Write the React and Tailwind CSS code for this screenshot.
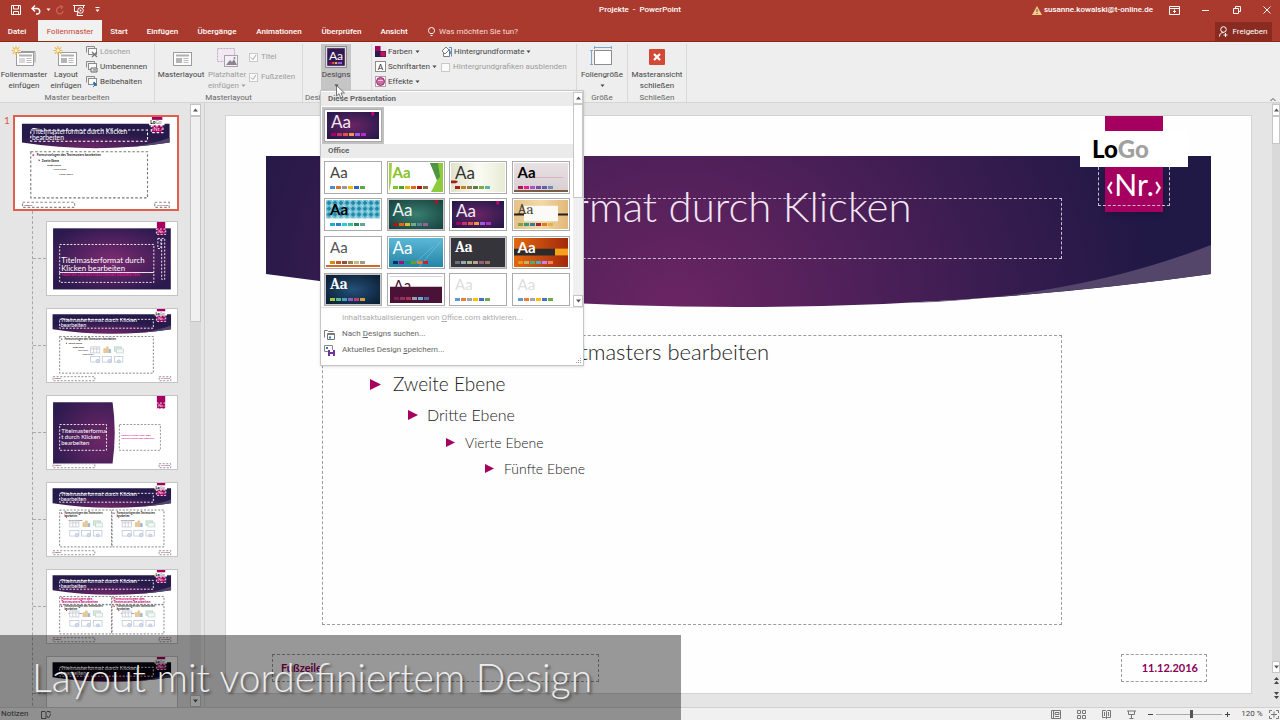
import React, { useState } from 'react';

const tabs = [
  { name: 'Datei', width: 'w-[34px]' },
  { name: 'Folienmaster', width: 'w-16' },
  { name: 'Start', width: 'w-[34px]' },
  { name: 'Einfügen', width: 'w-[53px]' },
  { name: 'Übergänge', width: 'w-14' },
  { name: 'Animationen', width: 'w-[68px]' },
  { name: 'Überprüfen', width: 'w-[57px]' },
  { name: 'Ansicht', width: 'w-12' },
];

const officeThemes = [
  { id: 'office', bg: 'bg-white', text: 'text-[#444]', colors: ['#4a90d0', '#e07030', '#999', '#f0b800', '#2f66b8', '#62a83c'] },
  { id: 'facette', bg: 'bg-white', text: 'text-[#85c226] font-bold', art: 'facet', colors: ['#85c226', '#4aa32e', '#e0b400', '#e06a1c', '#b01515', '#8a7040'] },
  { id: 'fetzen', bg: 'bg-linear-to-r from-[#e0e3cc] via-[#fbfbf4] to-[#e8ecd6]', text: 'text-[#333] text-[17px]', art: 'wisp', colors: ['#a32017', '#cf7a1c', '#8b7d57', '#5d7d4c', '#80aa50', '#62b39d'] },
  { id: 'galerie', bg: 'bg-linear-to-b from-[#e9e2e4] to-[#d6ced2]', text: 'text-black font-bold', art: 'gallery', colors: ['#b5125a', '#e0228a', '#a953cf', '#7550a5', '#5f5fae', '#6b90ad'] },
  { id: 'integral', bg: 'bg-white', text: 'text-black font-bold', art: 'integral', colors: ['#1badd8', '#2683c6', '#27ced7', '#42ba97', '#2c8853', '#62a39f'] },
  { id: 'ion', bg: 'bg-radial from-[#3a8070] to-[#16413f]', text: 'text-[#ebf5f0] text-[17px]', art: 'ion', frame: true, colors: ['#b01513', '#ea6312', '#e6b729', '#6bad8c', '#55839a', '#9e5e9b'] },
  { id: 'ion-raum', bg: 'bg-radial from-[#6a2366] to-[#211747]', text: 'text-[#f4e9f6] text-[17px]', art: 'ionraum', thick: true, colors: ['#a5005f', '#c9336a', '#e2554b', '#e99a4b', '#9d5ae0', '#b42bc9'] },
  { id: 'organisch', bg: 'bg-linear-to-r from-[#e6c288] via-[#f2d9a8] to-[#e2b878]', text: 'text-[#4a4034] font-serif', art: 'organic', colors: ['#7fa344', '#38987a', '#3479a8', '#a8242c', '#e0792c', '#e2b339'] },
  { id: 'rueckblick', bg: 'bg-white', text: 'text-[#555]', art: 'retro', colors: ['#e48312', '#bd582c', '#865640', '#9b8357', '#c2bc80', '#94a088'] },
  { id: 'segment', bg: 'bg-linear-to-b from-[#5bb8d6] to-[#2385a8]', text: 'text-white text-[17px]', art: 'slice', colors: ['#052f61', '#a50e82', '#14967c', '#6a9e1f', '#e87d37', '#c62324'] },
  { id: 'schiefer', bg: 'bg-[#36343b]', text: 'text-white font-bold font-serif', frame: true, colors: ['#6f6f74', '#92a9b9', '#a7b789', '#b9a489', '#8d6374', '#9b7362'] },
  { id: 'berlin', bg: 'bg-linear-to-r from-[#e3680e] to-[#a3280c]', text: 'text-white font-bold', art: 'berlin', colors: ['#f09415', '#c1b56b', '#4baf73', '#5aa6c0', '#d17df9', '#fa7e5c'] },
  { id: 'tiefe', bg: 'bg-radial from-[#24517a] to-[#0a1c30]', text: 'text-white font-bold font-serif', frame: true, colors: ['#a3c644', '#5ab88f', '#4a9fc0', '#8a60b8', '#c03f6c', '#d59e4a'] },
  { id: 'dividende', bg: 'bg-white', text: 'text-[#4d1434]', art: 'dividend', thick: true, colors: ['#7c1f56', '#903163', '#b2324b', '#969fa7', '#66b1ce', '#5563a8'] },
  { id: 'leer-1', bg: 'bg-white', text: 'text-[#ddd]', colors: ['#5b9bd5', '#ed7d31', '#a5a5a5', '#ffc000', '#4472c4', '#70ad47'] },
  { id: 'leer-2', bg: 'bg-white', text: 'text-[#ddd]', colors: ['#5b9bd5', '#ed7d31', '#a5a5a5', '#ffc000', '#4472c4', '#70ad47'] },
];

/* ---------- icons ---------- */

const SlideIcon = ({ star, wide }) => (
  <svg width="26" height="22" viewBox="0 0 26 22" fill="none">
    {wide && <path d="M10 5.500h14v11" stroke="#9c9c9c" />}
    <rect x="5.500" y="6.500" width={wide ? 17 : 18} height="13" fill="#fdfdfd" stroke="#9c9c9c" />
    <path d="M8 9.500h13" stroke="#b0b0b0" strokeWidth="2" />
    <rect x="8" y="12" width="6" height="5" fill={wide ? '#d8d8d8' : '#b5b5b5'} />
    <path d="M15.500 12.500h5M15.500 14.500h5M15.500 16.500h5" stroke="#aaa" strokeWidth=".8" />
    {star && <path d="M5 0v9M.5 4.500h9M1.800 1.300l6.400 6.400M8.200 1.300l-6.400 6.400" stroke="#efb545" strokeWidth="1.200" />}
    {star && <circle cx="5" cy="4.500" r="1.600" fill="#fff3cf" />}
  </svg>
);

const PlaceholderIcon = () => (
  <svg width="24" height="22" viewBox="0 0 24 22" fill="none">
    <rect x="2.500" y="2.500" width="17" height="13" fill="#f1e9f2" stroke="#c3a9c6" strokeDasharray="2 1" />
    <rect x="9.500" y="9.500" width="13" height="11" fill="#f5f0f6" stroke="#ab9fb0" />
    <path d="M11 19l4-5 2 2 2-3 3 6z" fill="#8d8493" />
    <circle cx="19.500" cy="12" r="1" fill="#8d8493" />
  </svg>
);

const SmallSlidesIcon = ({ kind }) => (
  <svg width="12" height="12" viewBox="0 0 12 12" fill="none" stroke="#8b8b8b">
    <path d="M.5 6.500v-6h8v2" />
    <rect x="2.500" y="2.500" width="8" height="6" fill="#fafafa" />
    {kind === 'delete' && <path d="M6 6l5 5M11 6l-5 5" stroke="#777" strokeWidth="1.200" />}
    {kind === 'rename' && <path d="M5 7h6v4H5zM7 9h3" fill="#eee" stroke="#666" />}
    {kind === 'keep' && <path d="M7 11l3-3M8 6l3 3-1.500.5-2-2z" fill="#2d6aa8" stroke="#2d6aa8" />}
  </svg>
);

const Caret = () => (
  <svg width="5" height="4" viewBox="0 0 5 4" className="inline-block shrink-0">
    <path d="M.5.5h4L2.500 3z" fill="currentColor" />
  </svg>
);

const DesignsIcon = () => (
  <svg width="22" height="22" viewBox="0 0 20 20">
    <rect x=".5" y=".5" width="19" height="19" fill="#e9e4f0" stroke="#8c8c8c" />
    <rect x="2" y="2" width="16" height="16" fill="#33194f" />
    <text x="10" y="12.500" fontSize="11" fill="#fff" textAnchor="middle" fontFamily="Lato">Aa</text>
    <path d="M4 15.500h2" stroke="#a5005f" strokeWidth="2" />
    <path d="M6.500 15.500h2" stroke="#e2554b" strokeWidth="2" />
    <path d="M9 15.500h2" stroke="#e9b14b" strokeWidth="2" />
    <path d="M11.500 15.500h4" stroke="#9d5ae0" strokeWidth="2" />
  </svg>
);

const ColorsIcon = () => (
  <svg width="11" height="11" viewBox="0 0 11 11">
    <rect width="11" height="11" fill="#2a1a4f" />
    <rect width="5" height="5" fill="#a5005f" />
    <rect x="5.500" width="5.500" height="5" fill="#f4e3ec" />
    <rect x="5.500" y="5.500" width="5" height="5" fill="#c2185b" />
  </svg>
);

const FontsIcon = () => (
  <svg width="11" height="11" viewBox="0 0 11 11">
    <rect x=".5" y=".5" width="10" height="10" fill="#fff" stroke="#8c8c8c" />
    <text x="5.500" y="8.500" fontSize="8" fill="#333" textAnchor="middle" fontFamily="Lato">A</text>
  </svg>
);

const EffectsIcon = () => (
  <svg width="11" height="11" viewBox="0 0 11 11">
    <rect x=".5" y=".5" width="10" height="10" fill="#fff" stroke="#b79bb0" />
    <circle cx="5.500" cy="5.500" r="4" fill="#cf6ba2" stroke="#8d2c66" />
    <path d="M3 4.500h5" stroke="#f1c8de" />
  </svg>
);

const BackgroundIcon = () => (
  <svg width="11" height="12" viewBox="0 0 11 12" fill="none" stroke="#5f5f5f" strokeWidth=".8">
    <path d="M2.500 3.500h6v7h-6z" fill="#fff" />
    <path d="M3 3l2-2 3 3-4 4-3-3z" fill="#fff" />
    <path d="M8 1.500h2.500v9" stroke="#3a79b7" />
    <path d="M9 5v3" stroke="#3a79b7" strokeWidth="1.500" />
  </svg>
);

const SlideSizeIcon = () => (
  <svg width="24" height="22" viewBox="0 0 24 22" fill="none">
    <rect x="4.500" y="4.500" width="17" height="14" fill="#fff" stroke="#8d8d8d" />
    <path d="M4 1.500h18M4.500 0v3M21.500 0v3M1.500 4v15M0 4.500h3M0 18.500h3" stroke="#7ba7cf" />
  </svg>
);

const CloseMasterIcon = () => (
  <svg width="16" height="16" viewBox="0 0 16 16">
    <rect width="16" height="16" rx="1" fill="#d24a36" />
    <path d="M5 5l6 6M11 5l-6 6" stroke="#fff" strokeWidth="2.200" />
  </svg>
);

const CheckMark = () => (
  <svg width="7" height="7" viewBox="0 0 7 7" className="pointer-events-none absolute left-px top-px" fill="none">
    <path d="M1 3.500L3 5.500 6 1" stroke="#a6a6a6" />
  </svg>
);

/* ---------- title bar and tabs ---------- */

const TitleBar = () => (
  <div className="grid h-5 grid-cols-[1fr_auto_1fr] items-center text-[8px] text-white">
    <div className="flex items-center pl-[11px]">
      <button aria-label="Speichern" className="w-5">
        <svg width="10" height="10" viewBox="0 0 10 10" fill="none" stroke="#fff">
          <path d="M.5.5h9v9h-9z" />
          <path d="M2.500.5v3.500h5V.5M2.500 9.500v-3h5v3" />
        </svg>
      </button>
      <button aria-label="Rückgängig" className="flex w-6 items-center gap-1">
        <svg width="11" height="10" viewBox="0 0 11 10" fill="none" stroke="#fff" strokeWidth="1.400">
          <path d="M4 .5L1 3.500l3 3M1 3.500h5.500a2.800 2.800 0 010 5.500H5" />
        </svg>
        <Caret />
      </button>
      <button aria-label="Wiederholen" className="w-[18px]">
        <svg width="9" height="10" viewBox="0 0 9 10" fill="none" stroke="#c9655a" strokeWidth="1.200">
          <path d="M6.500 2A3.500 3.500 0 104 8.900 3.500 3.500 0 008 6M5 .5l2.500 1-1 2.500" />
        </svg>
      </button>
      <button aria-label="Von Beginn an" className="w-[22px]">
        <svg width="12" height="11" viewBox="0 0 12 11" fill="none" stroke="#fff">
          <path d="M0 .5h12M1.500 1v5.500H5M10.500 1v2M4 10.500h6M5 6.500l-1 4" />
          <circle cx="7.500" cy="5.500" r="2.800" />
          <path d="M6.800 4.200v2.600l2-1.300z" fill="#fff" stroke="none" />
        </svg>
      </button>
      <button aria-label="Symbolleiste anpassen">
        <svg width="5" height="6" viewBox="0 0 5 6">
          <path d="M.5.5h4" stroke="#fff" />
          <path d="M.5 2.500h4L2.500 5z" fill="#fff" />
        </svg>
      </button>
    </div>
    <h1 className="whitespace-pre font-medium">Projekte  -  PowerPoint</h1>
    <div className="flex items-center justify-end">
      <svg width="10" height="9" viewBox="0 0 10 9" className="mr-0.5">
        <path d="M5 0l5 9H0z" fill="#f0cf8e" />
        <path d="M5 3v3M5 7v1" stroke="#6b4a1c" />
      </svg>
      <span className="font-medium">susanne.kowalski@t-online.de</span>
      <button aria-label="Menüband-Anzeigeoptionen" className="ml-4 flex w-[33px]">
        <svg width="11" height="9" viewBox="0 0 11 9" fill="none" stroke="#fff">
          <path d="M.5.5h10v8H.5zM.5 2.500h10M5.500 7V3.500M4 5.500h3" />
        </svg>
      </button>
      <button aria-label="Minimieren" className="flex w-[31px]">
        <svg width="8" height="8" viewBox="0 0 8 8"><path d="M0 4.500h7" stroke="#fff" /></svg>
      </button>
      <button aria-label="Verkleinern" className="flex w-[30px]">
        <svg width="8" height="8" viewBox="0 0 8 8" fill="none" stroke="#fff"><path d="M.5 2.500h5v5h-5zM2.500 2V.5h5v5H6" /></svg>
      </button>
      <button aria-label="Schließen" className="flex pr-[9px]">
        <svg width="8" height="8" viewBox="0 0 8 8" stroke="#fff"><path d="M.5.5l7 7M7.500.5l-7 7" /></svg>
      </button>
    </div>
  </div>
);

const TabBar = () => (
  <div className="flex h-[22px] items-end border-b border-[#8f2810] text-[8px] font-medium text-white">
    <nav className="flex h-full">
      {tabs.map((tab) => (
        <button
          key={tab.name}
          className={`${tab.width} h-full shrink-0 pt-0.5 ${
            tab.name === 'Folienmaster' ? 'mx-1 -mb-px bg-[#f1f1f1] font-normal text-[#c5432f] first:ml-0 h-[22px]' : ''
          } ${tab.name === 'Start' ? '-ml-1' : ''}`}
        >
          {tab.name}
        </button>
      ))}
    </nav>
    <label className="ml-[10px] flex h-full items-center gap-1 pt-0.5">
      <svg width="7" height="10" viewBox="0 0 7 10" fill="none" stroke="#fff">
        <path d="M2 6.500C1 5.500.5 4.500.5 3.500a3 3 0 016 0c0 1-.5 2-1.500 3zM2.500 8.500h2" />
      </svg>
      <input aria-label="Was möchten Sie tun?" placeholder="Was möchten Sie tun?" className="w-28 bg-transparent font-normal outline-none placeholder:text-[#f7dcd8]" />
    </label>
    <button className="ml-auto mr-2 flex h-[19px] w-[57px] items-center justify-center gap-1 bg-[#8a2b21] font-normal">
      <svg width="9" height="11" viewBox="0 0 9 11" fill="none" stroke="#fff">
        <circle cx="4.500" cy="3.500" r="2.800" />
        <path d="M.5 10.500c0-2.500 1.500-4 4-4M6.500 7v4M4.500 9h4" />
      </svg>
      Freigeben
    </button>
  </div>
);

/* ---------- ribbon ---------- */

const Group = ({ title, className, children }) => (
  <section className={`flex shrink-0 flex-col border-r border-[#d8d8d8] ${className}`}>
    <div className="flex h-12 shrink-0 items-start">{children}</div>
    <h2 className="whitespace-nowrap text-center text-[8px] leading-3 text-[#666]">{title}</h2>
  </section>
);

const BigButton = ({ icon, lines, className = '', children }) => (
  <button className={`flex h-full shrink-0 flex-col items-center whitespace-nowrap text-[8px] leading-[11px] ${className}`}>
    <span className="flex h-[25px] shrink-0 items-center">{icon}</span>
    {lines.map((line) => <span key={line}>{line}</span>)}
    {children}
  </button>
);

const SmallButton = ({ icon, label, caret, className = '' }) => (
  <button className={`flex h-[15px] items-center gap-0.5 whitespace-nowrap text-[8px] ${className}`}>
    {icon}
    {label}
    {caret && <Caret />}
  </button>
);

const Tick = ({ id, label, checked }) => (
  <div className="flex h-5 items-center gap-[3px] text-[8px] text-[#9d9d9d]">
    <span className="relative size-[9px]">
      <input id={id} type="checkbox" defaultChecked={checked} disabled className="block size-[9px] appearance-none border border-[#c9c9c9] bg-[#fbfbfb]" />
      {checked && <CheckMark />}
    </span>
    <label htmlFor={id} className="whitespace-nowrap">{label}</label>
  </div>
);

const Ribbon = () => (
  <div className="flex h-[61px] border-b border-[#d5d5d5] bg-[#eeeeee] pt-0.5 text-[#444]">
    <Group title="Master bearbeiten" className="w-[155px]">
      <BigButton className="w-[48px]" icon={<SlideIcon star wide />} lines={['Folienmaster', 'einfügen']} />
      <BigButton className="w-[36px]" icon={<SlideIcon star />} lines={['Layout', 'einfügen']} />
      <div className="flex flex-col pl-0.5">
        <SmallButton className="text-[#9d9d9d]" icon={<SmallSlidesIcon kind="delete" />} label="Löschen" />
        <SmallButton icon={<SmallSlidesIcon kind="rename" />} label="Umbenennen" />
        <SmallButton icon={<SmallSlidesIcon kind="keep" />} label="Beibehalten" />
      </div>
    </Group>
    <Group title="Masterlayout" className="w-[148px]">
      <BigButton className="w-[52px]" icon={<SlideIcon />} lines={['Masterlayout']} />
      <BigButton className="w-[40px] text-[#9d9d9d]" icon={<PlaceholderIcon />} lines={['Platzhalter']}>
        <span className="flex items-center gap-0.5">einfügen<Caret /></span>
      </BigButton>
      <div className="flex flex-col pl-0.5 pt-[3px]">
        <Tick id="titel" label="Titel" checked />
        <Tick id="fusszeilen" label="Fußzeilen" checked />
      </div>
    </Group>
    <Group title="Design bearbeiten" className="w-[69px]">
      <BigButton className="ml-[18px] w-[30px] bg-[#c5c5c5]" icon={<DesignsIcon />} lines={['Designs']}>
        <span className="flex h-[11px] items-center"><Caret /></span>
      </BigButton>
    </Group>
    <Group title="Hintergrund" className="w-[205px]">
      <div className="flex w-[65px] flex-col pl-[3px]">
        <SmallButton caret icon={<ColorsIcon />} label="Farben" />
        <SmallButton caret icon={<FontsIcon />} label="Schriftarten" />
        <SmallButton caret icon={<EffectsIcon />} label="Effekte" />
      </div>
      <div className="flex flex-col pl-1">
        <SmallButton caret icon={<BackgroundIcon />} label="Hintergrundformate" />
        <div className="-mt-0.5"><Tick id="grafiken" label="Hintergrundgrafiken ausblenden" /></div>
      </div>
    </Group>
    <Group title="Größe" className="w-[51px]">
      <BigButton className="w-[50px]" icon={<SlideSizeIcon />} lines={['Foliengröße']}>
        <span className="flex h-[11px] items-center"><Caret /></span>
      </BigButton>
    </Group>
    <Group title="Schließen" className="w-[59px]">
      <BigButton className="w-[58px]" icon={<CloseMasterIcon />} lines={['Masteransicht', 'schließen']} />
    </Group>
    <button aria-label="Menüband reduzieren" className="ml-auto mr-1 self-end">
      <svg width="6" height="5" viewBox="0 0 6 5" fill="none" stroke="#555"><path d="M.5 4L3 1.500 5.500 4" /></svg>
    </button>
  </div>
);

/* ---------- slide thumbnails, drawn in the slide's own 1027 x 578 units ---------- */

const dash = { fill: 'none', strokeDasharray: '16 12', strokeWidth: 7 };

const ThumbBadge = ({ logo = true }) => (
  <g fontFamily="Lato">
    <rect x="868" y="0" width="66" height="100" fill="#a5005f" />
    {logo && <rect x="850" y="18" width="98" height="34" fill="#fff" />}
    {logo && <text x="858" y="46" fontSize="30" fontWeight="900">Lo<tspan fill="#999">Go</tspan></text>}
    <rect x="864" y="56" width="74" height="42" stroke="#fff" {...dash} />
    <text x="901" y="90" fontSize="34" fill="#fff" textAnchor="middle">‹Nr.›</text>
  </g>
);

const ThumbFooter = () => (
  <g fontFamily="Lato" fontSize="14" fontWeight="700" fill="#8b0059">
    <rect x="48" y="536" width="330" height="32" stroke="#888" {...dash} />
    <rect x="886" y="536" width="92" height="32" stroke="#888" {...dash} />
    <text x="58" y="557">Fußzeile</text>
    <text x="900" y="557">11.12.2016</text>
  </g>
);

const ThumbBand = ({ dark, id }) => (
  <g>
    <defs>
      <radialGradient id={id} cx=".45" cy=".9" r=".55">
        <stop offset="0" stopColor={dark ? '#3d0733' : '#6b2566'} />
        <stop offset="1" stopColor={dark ? '#07060f' : '#261a4b'} />
      </radialGradient>
    </defs>
    <path d="M44 42h936v118Q512 232 44 160z" fill={`url(#${id})`} />
    <path d="M980 130v30q-140 22-250 28 150-20 250-58z" fill="#54456b" />
    <g fontFamily="Lato" fontSize="43" fill="#fff">
      <text x="108" y="104">Titelmasterformat durch Klicken</text>
      <text x="108" y="146">bearbeiten</text>
    </g>
    <rect x="100" y="82" width="740" height="70" stroke="#fff" {...dash} />
  </g>
);

const ThumbList = ({ x = 112, narrow }) => (
  <g fontFamily="Lato" fill="#222">
    <path d={`M${x} 232l12 7-12 7zM${x + 38} 266l10 6-10 6z`} fill="#a5005f" />
    <text x={x + 26} y="248" fontSize="21" fontWeight="700">{narrow ? 'Formatvorlagen des Textmasters' : 'Formatvorlagen des Textmasters bearbeiten'}</text>
    {narrow && <text x={x + 26} y="272" fontSize="21" fontWeight="700">bearbeiten</text>}
    {narrow ? (
      <text x={x + 58} y="300" fontSize="18">Zweite Ebene</text>
    ) : (
      <g>
        <text x={x + 58} y="280" fontSize="18" fontWeight="700">Zweite Ebene</text>
        <text x={x + 92} y="308" fontSize="16" fontWeight="700">Dritte Ebene</text>
        <text x={x + 130} y="336" fontSize="15">Vierte Ebene</text>
        <text x={x + 168} y="364" fontSize="15">Fünfte Ebene</text>
      </g>
    )}
  </g>
);

const ThumbIcons = ({ x, y = 300 }) => (
  <g transform={`translate(${x} ${y})`} fill="#fff" stroke="#bcc6da" strokeWidth="6">
    <rect x="0" y="0" width="72" height="48" />
    <path d="M0 16h72M24 0v48M48 0v48" stroke="#c8c8c8" />
    <path d="M104 48V14h14v34M124 48V0h14v48" fill="#ecca8a" stroke="#e2c08a" />
    <path d="M144 48V20h14v28" fill="#9fb5d6" stroke="#9fb5d6" />
    <rect x="188" y="0" width="54" height="34" fill="#dcebe3" stroke="#b4d2c6" />
    <rect x="204" y="16" width="54" height="32" fill="#f3f8f6" stroke="#c2d8cf" />
    <rect x="0" y="76" width="72" height="44" />
    <rect x="92" y="76" width="72" height="44" />
    <rect x="188" y="76" width="66" height="44" />
    <circle cx="56" cy="112" r="14" fill="#d3dcee" />
    <circle cx="150" cy="112" r="14" fill="#d3dcee" />
    <circle cx="222" cy="114" r="12" fill="#d3dcee" />
  </g>
);

const Thumb = ({ kind, id }) => (
  <svg viewBox="0 0 1027 578" preserveAspectRatio="none" className="block size-full bg-white">
    {kind === 'title' && (
      <g fontFamily="Lato">
        <defs>
          <radialGradient id={id} r=".6">
            <stop offset="0" stopColor="#7b2a70" />
            <stop offset="1" stopColor="#2a1a4e" />
          </radialGradient>
        </defs>
        <rect x="48" y="50" width="930" height="484" fill={`url(#${id})`} />
        <g fontSize="62" fill="#fff">
          <text x="112" y="322">Titelmasterformat durch</text>
          <text x="112" y="390">Klicken bearbeiten</text>
        </g>
        <rect x="100" y="178" width="744" height="222" stroke="#fff" {...dash} />
        <rect x="100" y="400" width="744" height="78" stroke="#fff" {...dash} />
        <text x="112" y="427" fontSize="30" fill="#d4148c" fontWeight="700">MASTER-UNTERTITELFORMAT BEARBEITEN</text>
        <rect x="876" y="130" width="24" height="80" stroke="#fff" {...dash} />
        <rect x="906" y="130" width="24" height="324" stroke="#fff" {...dash} />
        <ThumbBadge logo={false} />
      </g>
    )}
    {kind === 'section' && (
      <g fontFamily="Lato">
        <defs>
          <radialGradient id={id} cx=".8" cy=".6" r=".9">
            <stop offset="0" stopColor="#6f2768" />
            <stop offset="1" stopColor="#2a1a4e" />
          </radialGradient>
        </defs>
        <path d="M48 50h470q34 240 0 484H48z" fill={`url(#${id})`} />
        <g fontSize="47" fill="#fff">
          <text x="112" y="295">Titelmasterforma</text>
          <text x="112" y="342">t durch Klicken</text>
          <text x="112" y="390">bearbeiten</text>
        </g>
        <rect x="100" y="226" width="370" height="204" stroke="#fff" {...dash} />
        <rect x="572" y="226" width="324" height="204" stroke="#888" {...dash} />
        <g fontSize="20" fontWeight="700" fill="#d4148c">
          <text x="586" y="314">FORMATVORLAGEN DES</text>
          <text x="586" y="338">TEXTMASTERS BEARBEITEN</text>
        </g>
        <ThumbBadge logo={false} />
        <ThumbFooter />
      </g>
    )}
    {['master', 'content', 'two', 'compare', 'dark'].includes(kind) && (
      <g>
        <ThumbBand id={id} dark={kind === 'dark'} />
        <ThumbBadge />
        {kind !== 'dark' && <ThumbFooter />}
      </g>
    )}
    {(kind === 'master' || kind === 'content') && <ThumbList />}
    {(kind === 'master' || kind === 'content') && <rect x="100" y="218" width="740" height="290" stroke="#777" {...dash} />}
    {kind === 'content' && <ThumbIcons x={345} />}
    {kind === 'two' && (
      <g>
        <ThumbList narrow />
        <ThumbList narrow x={526} />
        <ThumbIcons x={180} />
        <ThumbIcons x={594} />
        <rect x="100" y="214" width="410" height="292" stroke="#777" {...dash} />
        <rect x="514" y="214" width="410" height="292" stroke="#777" {...dash} />
      </g>
    )}
    {kind === 'compare' && (
      <g fontFamily="Lato">
        {[112, 526].map((x) => (
          <g key={x}>
            <g fontSize="28" fill="#c2006e" fontWeight="700">
              <text x={x} y="236">Formatvorlagen des</text>
              <text x={x} y="262">Textmasters bearbeiten</text>
            </g>
            <g transform="translate(0 48)"><ThumbList narrow x={x} /></g>
            <ThumbIcons x={x + 68} y={324} />
            <rect x={x - 12} y="210" width="410" height="62" stroke="#777" {...dash} />
            <rect x={x - 12} y="276" width="410" height="230" stroke="#777" {...dash} />
          </g>
        ))}
      </g>
    )}
  </svg>
);

const ArrowButton = ({ down, label }) => (
  <button aria-label={label} className="flex h-3 w-full shrink-0 items-center justify-center border border-[#c6c6c6] bg-white">
    <svg width="5" height="4" viewBox="0 0 5 4"><path d={down ? 'M0 .5h5L2.500 3.500z' : 'M0 3.500h5L2.500.5z'} fill="#555" /></svg>
  </button>
);

const SlidePane = () => (
  <aside className="flex w-[205px] shrink-0 border-r border-[#d0d0d0]">
    <div className="min-w-0 flex-1 overflow-hidden pt-3">
      <div className="flex">
        <span className="w-[13px] pl-1 font-['Lato',sans-serif] text-[10px] leading-[10px] text-[#d9583f]">1</span>
        <button aria-label="Folienmaster" className="h-24 w-[166px] border-2 border-[#e0604d]"><Thumb kind="master" id="t-master" /></button>
      </div>
      <ul className="ml-8 flex flex-col gap-3 border-l border-dashed border-[#a8a8a8] pb-20 pt-[10px]">
        {['title', 'content', 'section', 'two', 'compare', 'dark'].map((kind) => (
          <li key={kind} className="flex items-center">
            <span className="w-[13px] border-t border-dashed border-[#a8a8a8]" />
            <button aria-label={`Layout ${kind}`} className="h-[75px] w-[132px] border border-[#c4c4c4]"><Thumb kind={kind} id={`t-${kind}`} /></button>
          </li>
        ))}
      </ul>
    </div>
    <div className="mr-[3px] flex w-[11px] flex-col bg-[#d9d9d9] pt-px">
      <ArrowButton label="Nach oben" />
      <div className="h-[206px] border border-[#c6c6c6] bg-[#f0f0f0]" />
      <div className="flex-1" />
      <ArrowButton down label="Nach unten" />
    </div>
  </aside>
);

/* ---------- slide ---------- */

const levels = [
  { text: 'Formatvorlagen des Textmasters bearbeiten', row: 'h-8 pb-0.5 pl-[10px] text-[22px]', bullet: 12, gap: 'w-[23px]' },
  { text: 'Zweite Ebene', row: 'h-[33px] pl-[47px] text-[19px]', bullet: 11, gap: 'w-[23px]' },
  { text: 'Dritte Ebene', row: 'h-[27px] pl-[85px] text-[16px]', bullet: 10, gap: 'w-[19px]' },
  { text: 'Vierte Ebene', row: 'h-7 pl-[123px] text-[14px]', bullet: 9, gap: 'w-[19px]' },
  { text: 'Fünfte Ebene', row: 'h-[25px] pl-[162px] text-[14px]', bullet: 9, gap: 'w-[19px]' },
];

const Slide = () => (
  <article className="relative flex min-h-[578px] flex-1 flex-col border border-[#d3d3d3] bg-[#fefefe] font-['Lato',sans-serif]">
    <svg viewBox="0 0 946 152" preserveAspectRatio="none" className="absolute left-10 right-10 top-10 h-[152px] w-[calc(100%-80px)]">
      <defs>
        <radialGradient id="band" gradientUnits="userSpaceOnUse" cx="410" cy="150" r="480" gradientTransform="translate(0 20) scale(1 .9)">
          <stop offset="0" stopColor="#6b2564" />
          <stop offset=".45" stopColor="#491f57" />
          <stop offset="1" stopColor="#201845" />
        </radialGradient>
      </defs>
      <path d="M0 0h946v118Q473 184 0 118z" fill="url(#band)" />
      <path d="M946 89v29Q793 139 640 147 810 142 946 89z" fill="#54456b" />
    </svg>
    <div className="relative ml-[96px] mr-[189px] mt-[82px] flex h-[61px] items-center border border-dashed border-[#cbbcd0] pl-3">
      <h2 className="whitespace-nowrap pb-1 text-[42px] font-light leading-[42px] text-[#f3e6f2]">
        Titelmasterformat durch Klicken<br />bearbeiten
      </h2>
    </div>
    <ul className="ml-[96px] mr-[189px] mt-[76px] flex-1 border border-dashed border-[#9c9c9c] font-light text-[#222]">
      {levels.map((level) => (
        <li key={level.text} className={`flex items-center ${level.row}`}>
          <span className={`shrink-0 ${level.gap}`}>
            <svg width={level.bullet} height={level.bullet} viewBox="0 0 10 10"><path d="M0 0l10 5-10 5z" fill="#a5005f" /></svg>
          </span>
          {level.text}
        </li>
      ))}
    </ul>
    <footer className="mb-[11px] ml-[46px] mr-11 mt-[29px] flex h-7 justify-between text-[11px] font-bold text-[#8b0059]">
      <span className="flex w-[327px] items-center border border-dashed border-[#9c9c9c] pl-2">Fußzeile</span>
      <time className="flex w-[86px] items-center justify-end border border-dashed border-[#9c9c9c] pr-2">11.12.2016</time>
    </footer>
    <div className="absolute right-[63px] top-0 flex w-[108px] flex-col items-center">
      <div className="h-[15px] w-[58px] bg-[#a5005f]" />
      <div className="w-full bg-white pl-3 text-[24px] font-black leading-[36px] text-black">
        Lo<span className="text-[#a0a0a0]">Go</span>
      </div>
      <div className="flex w-full justify-center">
        <div className="h-[45px] w-[58px] bg-[#a5005f] shadow-md">
          <div className="-mx-[7px] h-[39px] border border-t-0 border-dashed border-[#cbbcd0] text-center text-[30px] leading-[34px] text-white">‹Nr.›</div>
        </div>
      </div>
    </div>
  </article>
);

const EditArea = () => (
  <main className="flex min-w-0 flex-1">
    <div className="flex flex-1 flex-col px-5 pb-[13px] pt-3"><Slide /></div>
    <div className="flex w-2 shrink-0 flex-col bg-[#d9d9d9] pt-px">
      <ArrowButton label="Folie nach oben" />
      <div className="h-7 border border-[#c6c6c6] bg-white" />
      <div className="flex-1" />
      <ArrowButton down label="Folie nach unten" />
      <div className="flex h-[34px] flex-col items-center gap-2 bg-[#e5e5e5] pt-1">
        <svg width="5" height="7" viewBox="0 0 5 7"><path d="M0 3h5L2.500 0zM0 7h5L2.500 4z" fill="#444" /></svg>
        <svg width="5" height="7" viewBox="0 0 5 7"><path d="M0 0h5L2.500 3zM0 4h5L2.500 7z" fill="#444" /></svg>
      </div>
    </div>
  </main>
);

/* ---------- themes menu ---------- */

const ThemeArt = ({ art }) => (
  <svg viewBox="0 0 54 30" preserveAspectRatio="none" className="absolute inset-0 size-full">
    {art === 'facet' && <path d="M0 0h3l-1 20-2 10z" fill="#9fd24a" />}
    {art === 'facet' && <path d="M41 0h13v30H42l7-14z" fill="#8ccc3c" />}
    {art === 'facet' && <path d="M41 0h8l2 14-3 4z" fill="#4f9440" />}
    {art === 'wisp' && <path d="M0 18h5l2 1.500L5 21H0z" fill="#a32017" />}
    {art === 'gallery' && <path d="M0 28h54v2H0z" fill="#7b5d42" />}
    {art === 'gallery' && <path d="M20 15h29" stroke="#d99aa8" strokeWidth=".6" />}
    {art === 'integral' && (
      <g>
        <defs>
          <pattern id="dots" width="6" height="6" patternUnits="userSpaceOnUse">
            <rect width="6" height="6" fill="#7cc6d9" />
            <path d="M3 .5L5.500 3 3 5.500.5 3z" fill="#1e88a8" />
            <circle cx="0" cy="0" r="1" fill="#d8f0f5" />
            <circle cx="6" cy="6" r="1" fill="#d8f0f5" />
          </pattern>
        </defs>
        <rect width="54" height="19" fill="url(#dots)" />
      </g>
    )}
    {(art === 'ion' || art === 'ionraum') && <path d="M46 0h3v4h-3z" fill={art === 'ion' ? '#b01513' : '#c5006f'} />}
    {art === 'organic' && <path d="M0 14h10v2H0zM42 14h12v2H42z" fill="#222" />}
    {art === 'organic' && <rect x="10" y="6" width="34" height="16" fill="#fbfaf7" />}
    {art === 'retro' && <path d="M0 28h54v2H0z" fill="#cf6a2c" />}
    {art === 'slice' && <path d="M30 30L52 3M27 25L45 8" stroke="#8ed2e6" strokeWidth=".5" />}
    {art === 'berlin' && <path d="M0 11h41v7H0z" fill="#2b2b2b" />}
    {art === 'berlin' && <path d="M41 11h13v7H41z" fill="#f5a11c" />}
    {art === 'dividend' && <path d="M0 12h54v18H0z" fill="#4a1236" />}
    {art === 'dividend' && <path d="M0 .5h54" stroke="#b59aae" strokeWidth=".5" />}
  </svg>
);

const ThemeTile = ({ theme }) => (
  <button
    aria-label={theme.id}
    className={`h-[33px] w-[58px] border border-[#ababab] ${theme.thick ? 'bg-white p-0.5' : theme.frame ? 'bg-[#c8c8c8] p-px' : 'bg-white p-px'}`}
  >
    <span className={`relative flex size-full flex-col justify-between px-1 pb-[3px] ${theme.bg}`}>
      {theme.art && <ThemeArt art={theme.art} />}
      <span className={`relative text-left text-[15px] leading-[19px] font-['Lato',sans-serif] ${theme.text}`}>Aa</span>
      <span className="relative flex gap-px">
        {theme.colors.map((color) => (
          <span key={color} className="h-[3px] w-[5px]" style={{ backgroundColor: color }} />
        ))}
      </span>
    </span>
  </button>
);

const DesignMenu = () => (
  <div className="absolute left-[320px] top-[90px] w-[264px] border border-[#c6c6c6] bg-white text-[8px] shadow-sm">
    <div className="flex h-[217px] border-b border-[#e2e2e2]">
      <div className="flex-1 pt-px">
        <h3 className="h-[14px] bg-[#ebebeb] pl-[7px] font-bold leading-[14px] text-[#666]">Diese Präsentation</h3>
        <div className="flex h-[38px] items-center pl-px">
          <div className="border-2 border-[#c1c1c1]"><ThemeTile theme={officeThemes[6]} /></div>
        </div>
        <h3 className="h-[14px] bg-[#ebebeb] pl-[7px] font-bold leading-[14px] text-[#666]">Office</h3>
        <div className="grid h-[148px] grid-cols-4 content-between justify-between gap-x-1 pl-[3px] pr-[3px] pt-[3px]">
          {officeThemes.map((theme) => <ThemeTile key={theme.id} theme={theme} />)}
        </div>
      </div>
      <div className="flex w-[10px] flex-col bg-[#f0f0f0] pt-px">
        <ArrowButton label="Designs nach oben" />
        <div className="h-[94px] border border-[#c6c6c6] bg-white" />
        <div className="flex-1" />
        <ArrowButton down label="Designs nach unten" />
      </div>
    </div>
    <ul className="pb-[7px] pt-0.5 text-[#666]">
      <li><button disabled className="flex h-4 items-center pl-[21px] text-[#aaa]"><span>Inhaltsaktualisierungen von <u>O</u>ffice.com aktivieren...</span></button></li>
      <li>
        <button className="flex h-4 items-center gap-[7px] pl-[3px]">
          <svg width="11" height="11" viewBox="0 0 11 11" fill="none" stroke="#777">
            <path d="M.5 8.500v-7h3l1 1h5" />
            <path d="M3.500 4.500h7v6h-7z" fill="#fff" />
            <path d="M4 5.500h6" />
            <path d="M5 7.500h2v2H5z" fill="#3a79b7" stroke="none" />
          </svg>
          <span>Nach <u>D</u>esigns suchen...</span>
        </button>
      </li>
      <li>
        <button className="flex h-4 items-center gap-[7px] pl-[3px]">
          <svg width="11" height="11" viewBox="0 0 11 11" fill="none">
            <path d="M.5.5h8v6h-8z" stroke="#888" fill="#fff" />
            <path d="M2 2h2v2H2z" fill="#3a79b7" />
            <path d="M4 5h7v6H4z" fill="#7233a0" />
            <path d="M6 5h3v2H6zM6 9h3v2H6z" fill="#fff" />
          </svg>
          <span>Aktuelles Design <u>s</u>peichern...</span>
        </button>
      </li>
    </ul>
    <svg width="5" height="5" viewBox="0 0 5 5" className="absolute bottom-0.5 right-0.5" fill="#999"><path d="M4 0h1v1H4zM2 2h1v1H2zM4 2h1v1H4zM0 4h1v1H0zM2 4h1v1H2zM4 4h1v1H4z" /></svg>
    <svg width="10" height="14" viewBox="0 0 10 14" className="absolute -top-[6px] left-[15px]">
      <path d="M.5.500v10.500l2.500-2.300 1.800 4.300 2-.8L5 8h3.500z" fill="#fff" stroke="#555" strokeWidth=".8" />
    </svg>
  </div>
);

/* ---------- status bar ---------- */

const StatusBar = () => {
  const [zoom, setZoom] = useState(54);

  return (
    <footer className="flex h-[13px] shrink-0 items-center border-t border-[#d0d0d0] bg-[#f0f0f0] text-[8px] text-[#444]">
      <button className="pl-px">Notizen</button>
      <button aria-label="Rechtschreibung" className="ml-[13px]">
        <svg width="10" height="9" viewBox="0 0 10 9" fill="none" stroke="#666"><path d="M5 8.500H.5v-7H4l1 1 1-1h3v2M5 2.500v6M6 6l1.500 2L10 4" /></svg>
      </button>
      <div className="ml-auto flex items-center gap-4 pr-5">
        <button aria-label="Normal">
          <svg width="10" height="9" viewBox="0 0 10 9" fill="none" stroke="#777"><path d="M.5.5h9v8h-9zM2.500 1v7M4 2.500h4v2H4zM4 6.500h4" /></svg>
        </button>
        <button aria-label="Foliensortierung">
          <svg width="9" height="9" viewBox="0 0 9 9" fill="none" stroke="#777"><path d="M.5.5h3v3h-3zM5.500.5h3v3h-3zM.5 5.500h3v3h-3zM5.500 5.500h3v3h-3z" /></svg>
        </button>
        <button aria-label="Leseansicht">
          <svg width="9" height="9" viewBox="0 0 9 9" fill="none" stroke="#777"><path d="M.5.5h3l1 1 1-1h3v7h-3l-1 1-1-1h-3zM4.500 1.500v7M2.500 2v4M6.500 2v4" /></svg>
        </button>
        <button aria-label="Bildschirmpräsentation">
          <svg width="9" height="9" viewBox="0 0 9 9" fill="none" stroke="#777"><path d="M0 1h9M1.500 1v3.500h6V1M4.500 5v3M2.500 8.500h4" /></svg>
        </button>
      </div>
      <div className="flex items-center gap-[3px]">
        <button aria-label="Verkleinern" className="-ml-2"><svg width="5" height="5" viewBox="0 0 5 5"><path d="M0 2.500h5" stroke="#444" /></svg></button>
        <input
          type="range"
          aria-label="Zoom"
          value={zoom}
          onChange={(e) => setZoom(e.target.value)}
          className="h-2 w-[66px] appearance-none bg-[linear-gradient(#aaa,#aaa)] bg-[length:100%_1px] bg-center bg-no-repeat [&::-webkit-slider-thumb]:h-2 [&::-webkit-slider-thumb]:w-[3px] [&::-webkit-slider-thumb]:appearance-none [&::-webkit-slider-thumb]:bg-[#555]"
        />
        <button aria-label="Vergrößern"><svg width="5" height="5" viewBox="0 0 5 5"><path d="M0 2.500h5M2.500 0v5" stroke="#444" /></svg></button>
      </div>
      <button className="ml-[10px] w-6 whitespace-nowrap">120 %</button>
      <button aria-label="An Fenster anpassen" className="ml-[5px] mr-px">
        <svg width="10" height="9" viewBox="0 0 10 9" fill="none" stroke="#777"><path d="M.5 3V.5H3M7 .5h2.500V3M9.500 6v2.500H7M3 8.500H.5V6M5 1.500v6M2 4.500h6" /></svg>
      </button>
    </footer>
  );
};

const App = () => {
  return (
    <div className="relative flex min-h-screen flex-col overflow-hidden bg-[#e5e5e5] font-['Roboto','Open_Sans',sans-serif]">
      <header className="bg-[#ab3a2e]">
        <TitleBar />
        <TabBar />
      </header>
      <Ribbon />
      <div className="flex h-[calc(100vh-116px)] min-h-[604px]">
        <SlidePane />
        <EditArea />
      </div>
      <StatusBar />
      <DesignMenu />
      {/* video caption over the lower left corner */}
      <div className="pointer-events-none absolute bottom-0 left-0 h-[85px] w-[681px] bg-black/40 pl-8 pt-[18px]">
        <p className="whitespace-nowrap font-['Lato',sans-serif] text-[39px] font-light leading-[48px] text-[#ececec] [text-shadow:2px_2px_3px_rgba(0,0,0,0.5)]">Layout mit vordefiniertem Design</p>
      </div>
    </div>
  );
};

export default App;
